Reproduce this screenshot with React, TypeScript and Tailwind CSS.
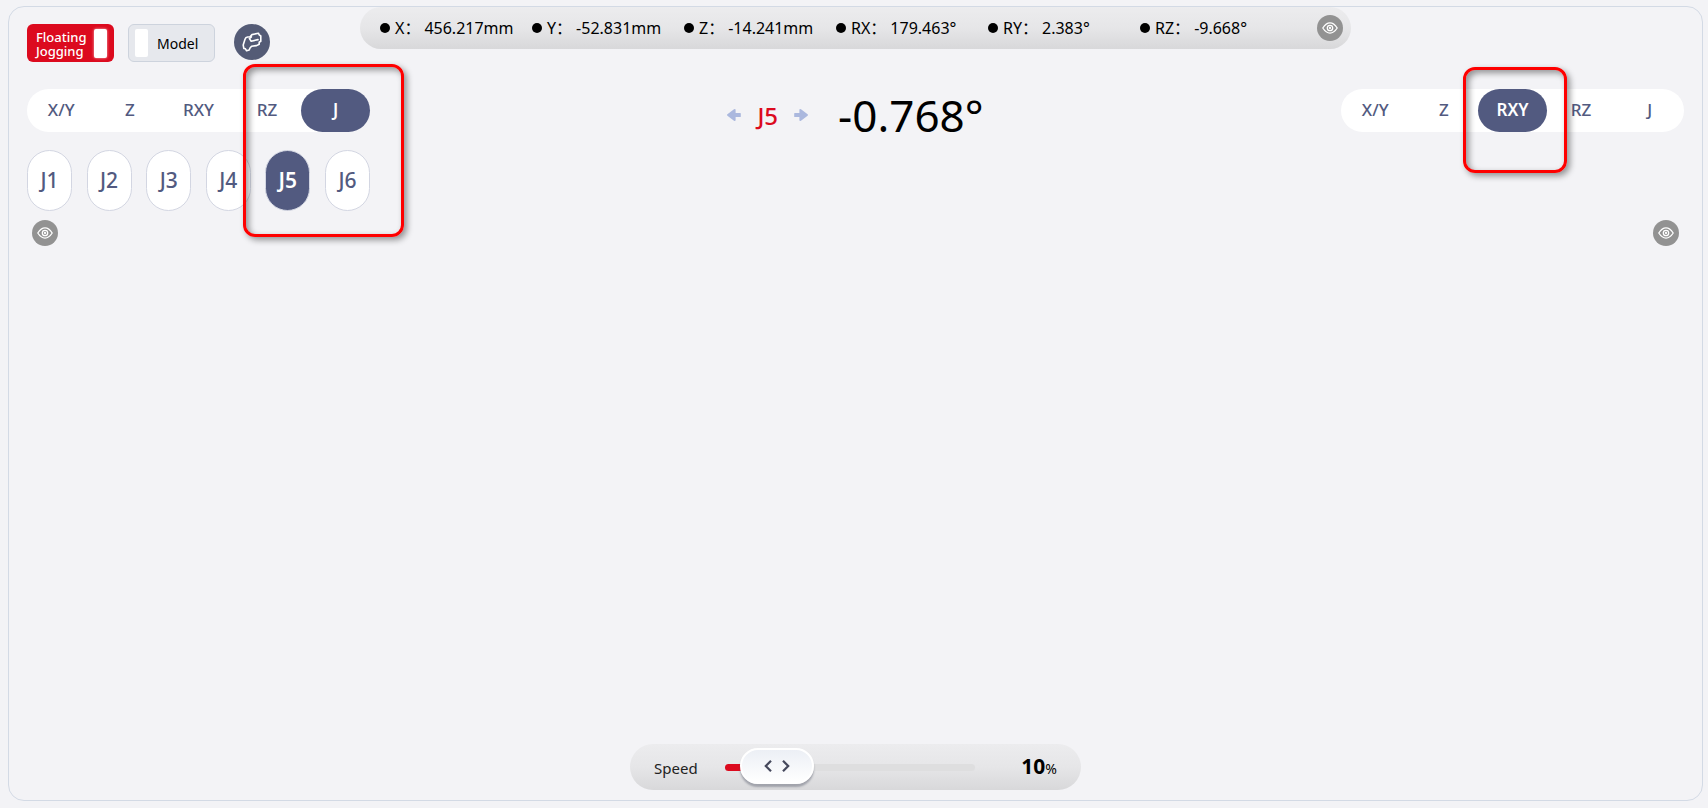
import React, { useState } from 'react'

const axes = ['X/Y', 'Z', 'RXY', 'RZ', 'J']
const joints = ['J1', 'J2', 'J3', 'J4', 'J5', 'J6']

const pose = [
   { label: 'X', value: '456.217mm' },
   { label: 'Y', value: '-52.831mm' },
   { label: 'Z', value: '-14.241mm' },
   { label: 'RX', value: '179.463°' },
   { label: 'RY', value: '2.383°' },
   { label: 'RZ', value: '-9.668°' },
]

const EyeButton = ({ label }: { label: string }) => (
   <button
      type="button"
      aria-label={label}
      className="flex size-[26px] shrink-0 items-center justify-center rounded-full bg-[#929292]"
   >
      <svg viewBox="0 0 16 12" className="h-3 w-4" fill="none" stroke="#fff" strokeWidth="1.3">
         <path d="M0.8 6C3 2.6 5.4 0.9 8 0.9S13 2.6 15.2 6C13 9.4 10.6 11.1 8 11.1S3 9.4 0.8 6Z" />
         <circle cx="8" cy="6" r="2.7" />
         <circle cx="8" cy="6" r="0.5" />
      </svg>
   </button>
)

const Arrow = ({ flip }: { flip?: boolean }) => (
   <svg viewBox="0 0 14 12" className={flip ? 'h-3 w-3.5 rotate-180' : 'h-3 w-3.5'} fill="#abb8de">
      <path d="M0.4 5.3 7 0.3Q8.6 -0.4 8.6 0.9V4H13.2Q13.8 4 13.8 4.6V7.4Q13.8 8 13.2 8H8.6V11.1Q8.6 12.4 7 11.7L0.4 6.7Q-0.3 6 0.4 5.3Z" />
   </svg>
)

interface AxisTabsProps {
   value: string
   onChange: (axis: string) => void
}

const AxisTabs = ({ value, onChange }: AxisTabsProps) => (
   <div className="grid h-[43px] w-[343px] grid-cols-5 rounded-full bg-white text-[17px] leading-6">
      {axes.map((axis) => (
         <button
            key={axis}
            type="button"
            onClick={() => onChange(axis)}
            className={
               axis === value
                  ? 'rounded-full bg-[#525a80] pb-0.5 font-semibold text-white'
                  : 'rounded-full pb-0.5 font-medium text-[#525a80]'
            }
         >
            {axis}
         </button>
      ))}
   </div>
)

// red marker frame drawn over the controls
const Marker = ({ className }: { className: string }) => (
   <div
      className={`pointer-events-none absolute rounded-xl border-3 border-[#fe0000] shadow-[3px_3px_6px_rgba(0,0,0,0.4),inset_3px_3px_6px_rgba(0,0,0,0.4)] ${className}`}
   />
)

const SpeedBar = () => {
   const [speed, setSpeed] = useState(10)

   return (
      <div className="mx-auto mt-auto mb-2.5 flex h-[46px] w-[451px] items-center rounded-full bg-linear-to-b from-[#ececee] via-[#e6e6e8] to-[#d8d8da] px-6">
         <label htmlFor="speed" className="w-[71px] pt-0.5 text-[15px] text-[#222]">
            Speed
         </label>
         <div className="relative h-[7px] w-[250px] rounded-full bg-[#dededf]">
            <div className="h-full rounded-full bg-[#dc0a1e]" style={{ width: `${speed + 5}%` }} />
            <div
               className="absolute -top-4 flex h-9 w-[74px] items-center justify-center gap-2.5 rounded-full border-2 border-white bg-linear-to-b from-[#eceff5] to-white shadow-[0_3px_2px_rgba(90,95,110,0.45)]"
               style={{ left: `${speed * 0.6}%` }}
            >
               <svg viewBox="0 0 8 12" className="h-3 w-2" fill="none" stroke="#45485c" strokeWidth="2.2">
                  <path d="M7 0.8 1.8 6 7 11.2" />
               </svg>
               <svg viewBox="0 0 8 12" className="h-3 w-2" fill="none" stroke="#45485c" strokeWidth="2.2">
                  <path d="M1 0.8 6.2 6 1 11.2" />
               </svg>
            </div>
            <input
               id="speed"
               type="range"
               min={1}
               max={100}
               value={speed}
               onChange={(e) => setSpeed(Number(e.target.value))}
               className="absolute -top-4 left-0 h-9 w-full cursor-pointer opacity-0"
            />
         </div>
         <div className="ml-auto text-[21px] font-bold text-black">
            {speed}
            <span className="text-sm font-normal">%</span>
         </div>
      </div>
   )
}

const App = () => {
   const [floating, setFloating] = useState(true)
   const [model, setModel] = useState(false)
   const [leftAxis, setLeftAxis] = useState('J')
   const [rightAxis, setRightAxis] = useState('RXY')
   const [joint, setJoint] = useState('J5')

   return (
      <div className="flex min-h-screen bg-[#f3f3f6] pt-1.5 pr-[5px] pb-[7px] pl-2 font-['Noto_Sans','Noto_Sans_CJK_SC',sans-serif]">
         <main className="flex flex-1 flex-col rounded-2xl border border-[#d3dae5]">
            <header className="grid grid-cols-[1fr_auto_1fr] items-start">
               <div className="flex items-start pt-[17px] pl-[18px]">
                  <button
                     type="button"
                     role="switch"
                     aria-checked={floating}
                     onClick={() => setFloating(!floating)}
                     className="flex h-[38px] w-[87px] items-center justify-between rounded-md bg-[#dc0a1e] pr-[7px] pl-[9px] text-left text-[13px] leading-[14px] font-medium text-white"
                  >
                     <span className="pt-0.5">
                        Floating
                        <br />
                        Jogging
                     </span>
                     <span className="h-[29px] w-[13px] rounded-xs bg-white shadow-[0_0_3px_rgba(255,255,255,0.7)]" />
                  </button>
                  <button
                     type="button"
                     role="switch"
                     aria-checked={model}
                     onClick={() => setModel(!model)}
                     className="ml-3.5 flex h-[38px] w-[87px] items-center gap-[9px] rounded-md border border-[#cdd3dd] bg-[#e6e8ed] pl-1.5 text-sm text-black"
                  >
                     <span className="h-7 w-[13px] rounded-xs bg-white" />
                     <span className="pt-0.5">Model</span>
                  </button>
                  <button
                     type="button"
                     aria-label="Gripper"
                     className="ml-[19px] flex size-9 items-center justify-center rounded-full bg-[#545b76]"
                  >
                     <svg
                        viewBox="0 0 20 20"
                        className="size-5"
                        fill="none"
                        stroke="#fff"
                        strokeWidth="1.6"
                        strokeLinejoin="round"
                        strokeLinecap="round"
                     >
                        <path d="M1.2 13 3 7.2Q3.6 5.2 5.6 5L8 4.8 10 2.6 16.4 1.2 17.2 2.8 18.8 4V9.2L17.2 10.2V12.2L14.6 13.6 9.6 14.2 8 16 7.2 18 4.6 18.8 3.4 16.8 1.8 16.4Z" />
                        <path d="M9.4 4.8 7.4 6.6 9.2 9.2 16 7.6" />
                     </svg>
                  </button>
               </div>

               <div className="flex h-[42px] items-center rounded-full bg-linear-to-b from-[#ececee] via-[#e6e6e8] to-[#d8d8da] pr-2 pl-5">
                  {pose.map((item) => (
                     <div key={item.label} className="flex w-[152px] items-center text-base whitespace-nowrap text-black">
                        <span className="mr-[5px] size-2.5 rounded-full bg-black" />
                        <span className="mr-1">{item.label}：</span>
                        <span>{item.value}</span>
                     </div>
                  ))}
                  <div className="ml-[25px] flex">
                     <EyeButton label="Toggle pose" />
                  </div>
               </div>
            </header>

            <section className="mt-[27px] grid grid-cols-[1fr_auto_1fr] items-start px-[18px]">
               <div className="relative w-[343px]">
                  <AxisTabs value={leftAxis} onChange={setLeftAxis} />
                  <div className="mt-[18px] mb-[9px] flex justify-between">
                     {joints.map((name) => (
                        <button
                           key={name}
                           type="button"
                           onClick={() => setJoint(name)}
                           className={
                              name === joint
                                 ? 'h-[61px] w-[45px] rounded-full border border-[#d3d6e2] bg-[#525a80] text-[21px] font-semibold text-white'
                                 : 'h-[61px] w-[45px] rounded-full border border-[#d3d6e2] bg-white text-[21px] font-medium text-[#525a80]'
                           }
                        >
                           {name}
                        </button>
                     ))}
                  </div>
                  <div className="flex pl-[5px]">
                     <EyeButton label="Toggle left pad" />
                  </div>
                  <Marker className="-top-[25px] left-[216px] h-[173px] w-[161px]" />
               </div>

               <div className="flex h-[52px] items-center">
                  <Arrow />
                  <span className="mx-4 pt-0.5 text-2xl font-medium text-[#dc0a1e]">{joint}</span>
                  <Arrow flip />
                  <span className="ml-[30px] text-[44px] leading-none text-black">-0.768°</span>
               </div>

               <div className="relative w-[343px] justify-self-end">
                  <AxisTabs value={rightAxis} onChange={setRightAxis} />
                  <div className="mt-[88px] flex justify-end pr-[5px]">
                     <EyeButton label="Toggle right pad" />
                  </div>
                  <Marker className="-top-[22px] left-[122px] h-[106px] w-[104px]" />
               </div>
            </section>

            <SpeedBar />
         </main>
      </div>
   )
}

export default App
